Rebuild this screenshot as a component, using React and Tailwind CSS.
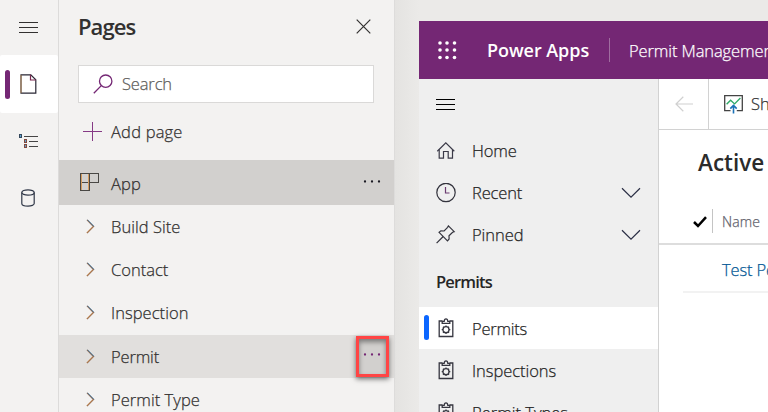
import React from "react";

function Chevron() {
  return (
    <svg width="9" height="15" viewBox="0 0 9 15" fill="none" strokeWidth="1.2">
      <path d="M1 .8 7.5 7.5 1 14.2" stroke="#8a6650" />
      <path d="M1.6 .8 8 7.3" stroke="#3c7fae" strokeWidth=".8" />
      <path d="M.8 13.8 7 7.6" stroke="#d08a45" strokeWidth=".8" />
    </svg>
  );
}

function Dots({ color }) {
  return (
    <svg width="18" height="3" viewBox="0 0 18 3" fill={color}>
      <circle cx="2" cy="1.5" r="1.15" />
      <circle cx="9" cy="1.5" r="1.15" />
      <circle cx="16" cy="1.5" r="1.15" />
    </svg>
  );
}

function Hamburger({ color }) {
  return (
    <svg width="20" height="12" viewBox="0 0 20 12" fill={color} shapeRendering="crispEdges">
      <path d="M0 0h19v1H0zM0 5h19v1H0zM0 10h19v1H0z" />
    </svg>
  );
}

function DownChevron() {
  return (
    <svg width="20" height="12" viewBox="0 0 20 12" fill="none" stroke="#2b2f45" strokeWidth="1.2">
      <path d="m1 1.3 9 8.9 9-8.9" />
    </svg>
  );
}

function HomeIcon() {
  return (
    <svg width="20" height="20" viewBox="0 0 20 20" fill="none" stroke="#3b3a48" strokeWidth="1.2">
      <path d="m1.300 10.200 8.500-8.400 8.500 8.400" />
      <path d="M3.200 8.600v8.600h4.300v-6.700h4.700v6.700h4.300V8.600" />
    </svg>
  );
}

function ClockIcon() {
  return (
    <svg width="20" height="20" viewBox="0 0 20 20" fill="none" stroke="#33333d" strokeWidth="1.2">
      <circle cx="10" cy="9.500" r="9.200" />
      <path d="M9.500 4v6h4" stroke="#6b3b70" />
    </svg>
  );
}

function PinIcon() {
  return (
    <svg width="20" height="20" viewBox="0 0 20 20" fill="none" stroke="#33333d" strokeWidth="1.2">
      <path d="m12.400.900 5.800 5.800-1.600.6-3.600 3.500.1 3.200-1.600 1.800L3.100 7.300l1.800-1.400 3.200.1 3.500-3.700zM7.200 11.500.6 18.200" />
    </svg>
  );
}

function ClipboardIcon() {
  return (
    <svg width="16" height="20" viewBox="0 0 16 20" fill="none" stroke="#363640" strokeWidth="1.3">
      <path d="M4.500 3H1.200v15.500h13.600V3h-3.300" />
      <path d="M4.200 5.400V3.300h2C6.300 1.800 6.900.9 8 .9s1.700.9 1.800 2.400h2v2.100z" />
      <circle cx="8" cy="11.700" r="3" />
      <path d="M8 7.400v1.300M8 14.700V16M3.700 11.700H5M11 11.700h1.300M5 8.700l.9.900M10.100 13.800l.9.900M11 8.700l-.9.900M5.900 13.800l-.9.900" />
    </svg>
  );
}

function PageRow({ label, tracking, selected }) {
  return (
    <div className={`flex h-[43.2px] shrink-0 items-center pl-[27px] ${selected ? "bg-[#e1dfdd]" : ""}`}>
      <Chevron />
      <span className={`ml-[16px] pt-px ${tracking}`}>{label}</span>
    </div>
  );
}

function NavRow({ icon, label, tracking, chevron }) {
  return (
    <div className="flex h-[42px] shrink-0 items-center pl-[17px] pr-[17px]">
      <span className="flex w-5 justify-center">{icon}</span>
      <span className={`ml-[16px] flex-1 whitespace-nowrap ${tracking}`}>{label}</span>
      {chevron && <DownChevron />}
    </div>
  );
}

function Rail() {
  return (
    <aside className="flex w-[59px] shrink-0 flex-col border-r border-[#dcdbda] bg-[#f3f2f1]">
      <div className="flex h-[55px] items-start pl-[19px] pt-[22px]">
        <Hamburger color="#323130" />
      </div>
      <div className="flex h-[58px] items-center rounded-[2px] bg-white pl-[5px]">
        <div className="h-[29px] w-[5px] rounded-full bg-[#742774]" />
        <svg className="-mt-px ml-[10px]" width="17" height="20" viewBox="0 0 17 20" fill="none" stroke="#292735" strokeWidth="1.2">
          <path d="M1 .8h9.800l5 5v13.400H1z" />
          <path d="M10.500.8V6h5.300" stroke="#7b2850" />
          <path d="M1 1v18" stroke="#d39a50" strokeWidth=".7" />
        </svg>
      </div>
      <div className="flex h-[58px] items-start pl-[19px] pt-[21px]">
        <svg width="20" height="14" viewBox="0 0 20 14" fill="none" shapeRendering="crispEdges">
          <path d="M5 2.500h14M10 7.500h9M10 12.500h9" stroke="#454545" />
          <path d="M.5.5h2v3h-2z" stroke="#34485c" />
          <path d="M5.500 5.500h2v3h-2zM5.500 10.500h2v3h-2z" stroke="#81493e" />
          <path d="M1 1h1v2H1zM6 6h1v2H6zM6 11h1v2H6z" fill="#5ba1cf" />
        </svg>
      </div>
      <div className="flex pl-[21px] pt-[18px]">
        <svg width="14" height="18" viewBox="0 0 14 18" fill="none" stroke="#303848" strokeWidth="1.2">
          <ellipse cx="7" cy="3.500" rx="6.200" ry="2.600" />
          <path d="M.8 3.500v11c0 1.500 2.800 2.600 6.200 2.600s6.200-1.100 6.200-2.600v-11" />
        </svg>
      </div>
    </aside>
  );
}

function PagesPanel() {
  return (
    <section className="flex w-[336px] shrink-0 flex-col border-r border-[#dddcdb] bg-[#f3f2f1] text-[#323130]">
      <div className="flex h-[65px] shrink-0 items-start justify-between pl-[19px] pr-[23px]">
        <h1 className="mt-[9px] text-[22px] font-semibold leading-[34px] tracking-[-0.9px] text-[#323130] [-webkit-text-stroke:0px]">Pages</h1>
        <svg className="mt-[19px]" width="15" height="15" viewBox="0 0 15 15" stroke="#323130" strokeWidth="1.2">
          <path d="m.7.700 13.600 13.600M14.300.700.700 14.300" />
        </svg>
      </div>
      <div className="ml-[19px] flex h-[38px] w-[296px] shrink-0 items-center border border-[#dad9d8] bg-white pl-[14px] text-[#605e5c]">
        <svg className="-mt-px" width="20" height="20" viewBox="0 0 20 20" fill="none" stroke="#742774" strokeWidth="1.3">
          <circle cx="12.700" cy="7.200" r="6.200" />
          <path d="M8.300 11.600.8 19.200" />
        </svg>
        <span className="ml-[9px] tracking-[-0.15px]">Search</span>
      </div>
      <div className="flex h-[57px] shrink-0 items-center pl-[24px]">
        <svg width="19" height="19" viewBox="0 0 19 19" fill="#853a85" shapeRendering="crispEdges">
          <path d="M9 0h1v19H9zM0 9h19v1H0z" />
        </svg>
        <span className="ml-[9px] pt-px tracking-[0.2px]">Add page</span>
      </div>
      <div className="flex h-[45px] shrink-0 items-center bg-[#d2d0ce] pl-[21px] pr-[13px]">
        <svg className="-mt-[2px]" width="19" height="18" viewBox="0 0 19 18" fill="none" stroke="#494744" shapeRendering="crispEdges">
          <path d="M.5.500h17.500v8.500H.5zM.5.500h9v17h-9z" />
          <path d="M1.500 1v16M8.500 1v16" stroke="#d39b5e" />
        </svg>
        <span className="ml-[12px] flex-1 pt-[3px] tracking-[0.1px]">App</span>
        <span className="-mt-[2px] flex"><Dots color="#1b1a23" /></span>
      </div>
      <PageRow label="Build Site" tracking="tracking-[0.05px]" />
      <PageRow label="Contact" tracking="tracking-[0px]" />
      <PageRow label="Inspection" tracking="tracking-[0.05px]" />
      <div className="relative shrink-0">
        <PageRow label="Permit" tracking="tracking-[-0.15px]" selected />
        <div className="absolute right-[5px] top-px flex h-[41px] w-[33px] items-center justify-center border-3 border-[#ff4545] bg-[#d2d0ce] shadow-[0_2px_5px_rgba(0,0,0,0.55),inset_0_3px_5px_rgba(0,0,0,0.42)]">
          <span className="-ml-[2px] -mt-[3px] flex"><Dots color="#742774" /></span>
        </div>
      </div>
      <PageRow label="Permit Type" tracking="tracking-[0.05px]" />
    </section>
  );
}

function SiteNav() {
  return (
    <nav className="flex w-[240px] shrink-0 flex-col border-r border-[#d2d2d2] bg-[#efefef] text-[#262626]">
      <div className="flex h-[51px] shrink-0 items-start pl-[17px] pt-[20px]">
        <Hamburger color="#000000" />
      </div>
      <NavRow icon={<HomeIcon />} label="Home" tracking="tracking-[-0.1px]" />
      <NavRow icon={<ClockIcon />} label="Recent" tracking="tracking-[-0.15px]" chevron />
      <NavRow icon={<PinIcon />} label="Pinned" tracking="tracking-[-0.05px]" chevron />
      <div className="flex h-[51px] shrink-0 items-center pl-[17px] font-semibold tracking-[-0.8px] [-webkit-text-stroke:0px]">Permits</div>
      <div className="relative shrink-0 bg-white">
        <NavRow icon={<ClipboardIcon />} label="Permits" tracking="pt-[2px] tracking-[-0.25px]" />
        <div className="absolute left-[5px] top-[8px] h-[25px] w-[5px] rounded-full bg-[#0b66ff]" />
      </div>
      <NavRow icon={<ClipboardIcon />} label="Inspections" tracking="pt-[2px] tracking-[-0.05px]" />
      <NavRow icon={<ClipboardIcon />} label="Permit Types" tracking="pt-[2px] tracking-[0px]" />
    </nav>
  );
}

function RecordList() {
  return (
    <main className="flex min-w-0 flex-1 flex-col overflow-hidden bg-white">
      <div className="flex h-[51px] shrink-0 border-b border-[#d2d2d2]">
        <div className="flex w-[50px] shrink-0 items-center justify-center border-r border-[#d2d2d2]">
          <svg width="18" height="16" viewBox="0 0 18 16" fill="none" stroke="#d0d0d0" strokeWidth="1.2">
            <path d="M18 8H1M8.300.800 1 8l7.300 7.200" />
          </svg>
        </div>
        <div className="flex items-center pl-[15px] text-[#333333]">
          <svg width="19" height="19" viewBox="0 0 19 19" fill="none">
            <path d="M6.500 15.700H.7V.700h17.600v15h-5.500" stroke="#444444" strokeWidth="1.3" />
            <path d="m2.600 9.300 4-4 4 3.600 5.800-5.800" stroke="#2fa968" strokeWidth="1.4" />
            <path d="M9.500 18.500v-7.300M6.300 13.600l3.200-3.200 3.200 3.200" stroke="#1b72b8" strokeWidth="1.6" />
          </svg>
          <span className="ml-2 whitespace-nowrap tracking-[-0.1px]">Show Chart</span>
        </div>
      </div>
      <div className="flex h-[66px] shrink-0 items-center whitespace-nowrap pl-[39px] text-[22.5px] font-semibold tracking-[0px] text-[#2b2b2b] [-webkit-text-stroke:0px]">Active Permits</div>
      <div className="flex h-[49px] shrink-0 items-center border-b-2 border-[#dddddd] pl-[34px]">
        <svg className="mt-[5px]" width="14" height="12" viewBox="0 0 14 12" fill="none" stroke="#000000" strokeWidth="2.5">
          <path d="m1 6 4 4L13 1.200" />
        </svg>
        <div className="ml-[5px] mt-[3px] h-[24px] w-px bg-[#c4c4c4]" />
        <span className="ml-[9px] pt-[4px] text-[14px] tracking-[0.1px] text-[#62626c]">Name</span>
      </div>
      <div className="ml-[24px] flex h-[48px] shrink-0 items-center whitespace-nowrap border-b-2 border-[#f2f2f2] pl-[39px] pt-[4px] tracking-[-0.15px] text-[#075a96]">Test Permit</div>
    </main>
  );
}

export default function App() {
  return (
    <div className="flex h-[412px] w-[768px] overflow-hidden bg-[#ebeae8] font-['Open_Sans','Noto_Sans',sans-serif] text-[16.5px] font-light leading-6 [-webkit-text-stroke:0.25px]">
      <Rail />
      <PagesPanel />
      <div className="w-[24px] shrink-0 bg-linear-to-r from-[#e4e3e1] to-[#ebeae8]" />
      <div className="flex min-w-0 flex-1 flex-col pt-[21px]">
        <header className="flex h-[58px] shrink-0 items-center overflow-hidden whitespace-nowrap bg-[#742774] pl-[19px] text-white">
          <svg className="shrink-0" width="19" height="19" viewBox="0 0 19 19" fill="#ffffff">
            {[2, 9, 16.5].map((y) => [2, 9, 16.5].map((x) => <circle key={`${x}-${y}`} cx={x} cy={y} r="1.8" />))}
          </svg>
          <span className="ml-[30px] w-[103px] shrink-0 text-[18px] font-semibold tracking-[-0.05px] [-webkit-text-stroke:0px]">Power Apps</span>
          <div className="ml-[19px] h-[24px] w-px shrink-0 bg-[#a06da0]" />
          <span className="ml-[19px] pt-px text-[16.5px] tracking-[-0.1px]">Permit Management</span>
        </header>
        <div className="flex min-h-0 flex-1">
          <SiteNav />
          <RecordList />
        </div>
      </div>
    </div>
  );
}
